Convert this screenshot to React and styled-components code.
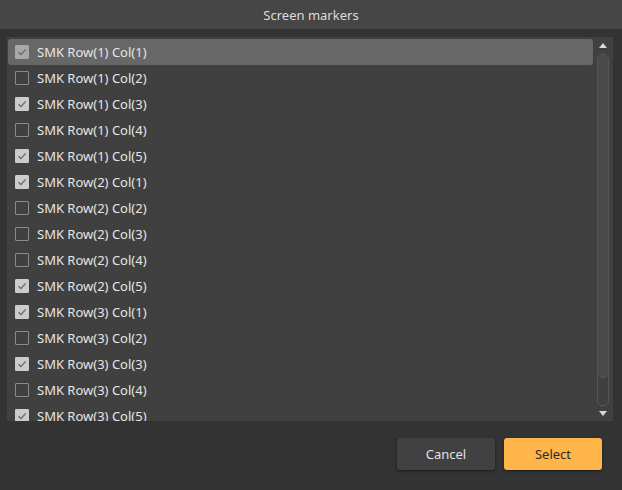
import React, { useState } from 'react'
import styled, { createGlobalStyle } from 'styled-components'

const GlobalStyle = createGlobalStyle`
	html, body {
		margin: 0;
		padding: 0;
		background: #333333;
		font-family: "Noto Sans", "Open Sans", sans-serif;
	}
`

const markers = []
const checkedInit = [true, false, true, false, true, true, false, false, false, true, true, false, true, false, true]
for (let r = 1; r <= 3; r++) {
	for (let c = 1; c <= 5; c++) {
		markers.push(`SMK Row(${r}) Col(${c})`)
	}
}

export default function App() {
	const [checked, setChecked] = useState(checkedInit)
	const [active, setActive] = useState(0)

	const toggle = (i) => {
		setActive(i)
		setChecked(checked.map((v, j) => (j === i ? !v : v)))
	}

	return (
		<Window>
			<GlobalStyle />
			<TitleBar>Screen markers</TitleBar>
			<Body>
				<Panel>
					<List>
						{markers.map((label, i) =>
							<Row key={label} active={i === active} onClick={() => toggle(i)}>
								<Box checked={checked[i]} active={i === active}>
									{checked[i] &&
										<svg width="10" height="10" viewBox="0 0 10 10">
											<path d="M1.5 5.2 L4 7.6 L8.6 2.4" fill="none" stroke="#6a6a6a" strokeWidth="1.4" />
										</svg>
									}
								</Box>
								<Label>{label}</Label>
							</Row>
						)}
					</List>
					<ScrollBar>
						<Arrow up />
						<Track>
							<Thumb />
						</Track>
						<Arrow />
					</ScrollBar>
				</Panel>
				<Footer>
					<Button>Cancel</Button>
					<Button primary>Select</Button>
				</Footer>
			</Body>
		</Window>
	)
}

const Window = styled.div`
	width: 622px;
	height: 490px;
	background: #333333;
	display: flex;
	flex-direction: column;
	overflow: hidden;
`

const TitleBar = styled.div`
	height: 29px;
	background: #464646;
	color: #dcdcdc;
	font-size: 13px;
	display: flex;
	align-items: center;
	justify-content: center;
`

const Body = styled.div`
	flex: 1;
	display: flex;
	flex-direction: column;
	padding: 8px 9px 0 7px;
`

const Panel = styled.div`
	height: 384px;
	background: #404040;
	display: flex;
	overflow: hidden;
`

const List = styled.div`
	flex: 1;
	padding: 2px 0 0 1px;
	overflow: hidden;
`

const Row = styled.div`
	height: 26px;
	display: flex;
	align-items: center;
	padding-left: 7px;
	border-radius: 3px;
	background: ${p => (p.active ? '#676767' : 'transparent')};
	cursor: pointer;
`

const Box = styled.div`
	width: 14px;
	height: 14px;
	box-sizing: border-box;
	border: 1px solid ${p => (p.checked ? (p.active ? '#a8a8a8' : '#cbcbcb') : '#8a8a8a')};
	background: ${p => (p.checked ? (p.active ? '#a8a8a8' : '#cbcbcb') : 'transparent')};
	border-radius: 1px;
	display: flex;
	align-items: center;
	justify-content: center;
	margin-right: 8px;
`

const Label = styled.span`
	color: #e6e6e6;
	font-size: 13px;
	white-space: nowrap;
`

const ScrollBar = styled.div`
	width: 20px;
	display: flex;
	flex-direction: column;
	align-items: center;
	padding: 6px 0 5px;
	box-sizing: border-box;
`

const Arrow = styled.div`
	width: 0;
	height: 0;
	border-left: 4px solid transparent;
	border-right: 4px solid transparent;
	${p => (p.up
		? 'border-bottom: 5px solid #d8d8d8; margin-bottom: 6px;'
		: 'border-top: 5px solid #d8d8d8; margin-top: 5px;')}
`

const Track = styled.div`
	flex: 1;
	width: 12px;
	box-sizing: border-box;
	border: 1px solid #575757;
	border-radius: 5px;
	display: flex;
	flex-direction: column;
`

const Thumb = styled.div`
	height: 322px;
	border-radius: 5px;
	background: #4a4a4a;
	border-bottom: 1px solid #5a5a5a;
`

const Footer = styled.div`
	display: flex;
	justify-content: flex-end;
	gap: 9px;
	padding: 17px 11px 0 0;
`

const Button = styled.button`
	width: 98px;
	height: 32px;
	border: none;
	border-radius: 3px;
	font-family: "Noto Sans", "Open Sans", sans-serif;
	font-size: 13px;
	cursor: pointer;
	background: ${p => (p.primary ? '#ffb54a' : '#414141')};
	color: ${p => (p.primary ? '#2a2a2a' : '#e0e0e0')};
	box-shadow: 0 1px 3px rgba(0, 0, 0, 0.5);
`
